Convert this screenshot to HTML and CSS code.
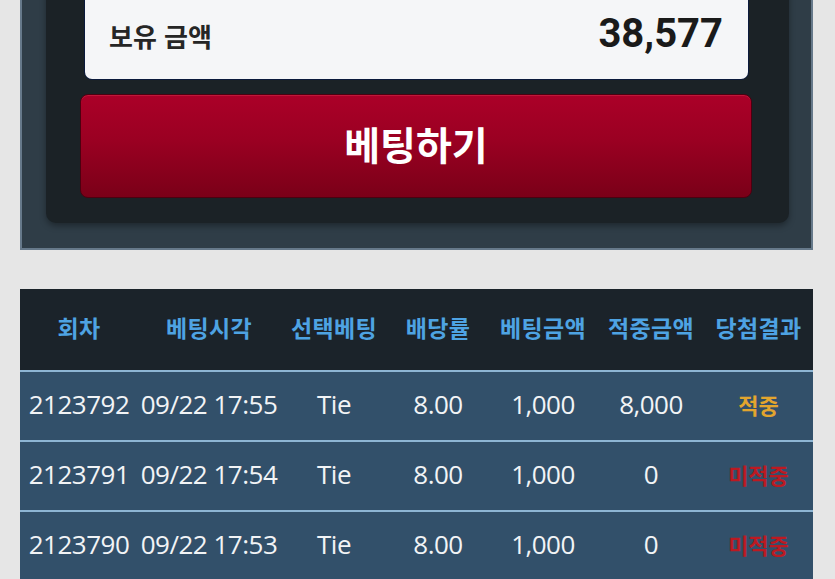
FILE: index.html
```html
<!DOCTYPE html>
<html lang="ko">
<head>
<meta charset="utf-8">
<title>베팅</title>
<link rel="stylesheet" href="styles.css">
</head>
<body>
<div class="page">
  <section class="panel">
    <div class="bet-box">
      <div class="balance">
        <span class="balance-label">보유 금액</span>
        <span class="balance-value">38,577</span>
      </div>
      <button class="bet-btn" type="button">베팅하기</button>
    </div>
  </section>

  <table class="history">
    <colgroup>
      <col class="c1"><col class="c2"><col class="c3"><col class="c4"><col class="c5"><col class="c6"><col class="c7">
    </colgroup>
    <thead>
      <tr>
        <th>회차</th><th>베팅시각</th><th>선택베팅</th><th>배당률</th><th>베팅금액</th><th>적중금액</th><th>당첨결과</th>
      </tr>
    </thead>
    <tbody>
      <tr>
        <td>2123792</td><td>09/22 17:55</td><td>Tie</td><td>8.00</td><td>1,000</td><td>8,000</td><td class="win">적중</td>
      </tr>
      <tr>
        <td>2123791</td><td>09/22 17:54</td><td>Tie</td><td>8.00</td><td>1,000</td><td>0</td><td class="lose">미적중</td>
      </tr>
      <tr>
        <td>2123790</td><td>09/22 17:53</td><td>Tie</td><td>8.00</td><td>1,000</td><td>0</td><td class="lose">미적중</td>
      </tr>
    </tbody>
  </table>
</div>
</body>
</html>
```
FILE: styles.css
```css
html, body {
  margin: 0;
  padding: 0;
}
body {
  background: #e6e6e6;
  font-family: "Noto Sans CJK KR", "Noto Sans", sans-serif;
  overflow: hidden;
}
.page {
  padding: 0 22px 0 20px;
}
.panel {
  margin-top: -30px;
  background: #2f3d47;
  border: 2px solid #66798a;
  border-top: none;
  padding: 0 22px 25px 24px;
}
.bet-box {
  background: #1b2226;
  border-radius: 0 0 10px 10px;
  box-shadow: 0 3px 6px rgba(0, 0, 0, 0.35);
  padding: 0 37px 25px 34px;
  display: flex;
  flex-direction: column;
  gap: 15px;
}
.balance {
  margin: 0 4px 0 5px;
  height: 109px;
  box-sizing: border-box;
  background: #f5f6f8;
  border-radius: 0 0 7px 7px;
  box-shadow: 0 1px 0 #0b1a3c, 1px 0 0 #0b1a3c, -1px 0 0 #0b1a3c;
  padding: 44px 25px 0 24px;
  display: flex;
  justify-content: space-between;
  align-items: baseline;
}
.balance-label {
  font-size: 26px;
  font-weight: 700;
  line-height: 1;
  color: #262626;
}
.balance-value {
  font-family: Roboto, "Liberation Sans", sans-serif;
  font-size: 40px;
  font-weight: 700;
  line-height: 1;
  color: #1a1a1a;
}
.bet-btn {
  height: 104px;
  border: 1px solid #4d0010;
  border-radius: 8px;
  background: linear-gradient(180deg, #ab0028 0%, #9a0022 45%, #7a0018 100%);
  box-shadow: inset 0 1px 0 rgba(255, 90, 110, 0.25);
  color: #ffffff;
  font-family: "Noto Sans CJK KR", sans-serif;
  font-size: 39px;
  font-weight: 700;
  padding: 0 0 6px;
  cursor: pointer;
}
.history {
  margin-top: 39px;
  width: 793px;
  border-collapse: collapse;
  table-layout: fixed;
}
.c1 { width: 118px; }
.c2 { width: 142px; }
.c3 { width: 108px; }
.c4 { width: 100px; }
.c5 { width: 110px; }
.c6 { width: 106px; }
.c7 { width: 109px; }
.history th {
  background: #1b232a;
  height: 82px;
  padding: 0 0 5px;
  box-sizing: border-box;
  color: #4ea3e3;
  font-size: 23px;
  font-weight: 700;
  letter-spacing: 0.3px;
  text-align: center;
  white-space: nowrap;
  border-bottom: 2px solid #8db5d3;
}
.history td {
  background: #32506a;
  height: 64px;
  padding: 0 0 4px;
  color: #f2f4f6;
  font-family: "Open Sans", "Noto Sans CJK KR", sans-serif;
  font-size: 26px;
  letter-spacing: -0.5px;
  text-align: center;
  white-space: nowrap;
  border-bottom: 2px solid #8db5d3;
}
.history td.win,
.history td.lose {
  font-family: "Noto Sans CJK KR", sans-serif;
  font-size: 22px;
  font-weight: 700;
  letter-spacing: 0;
}
.history td.win { color: #e2a52e; }
.history td.lose { color: #bb1a22; }
```
